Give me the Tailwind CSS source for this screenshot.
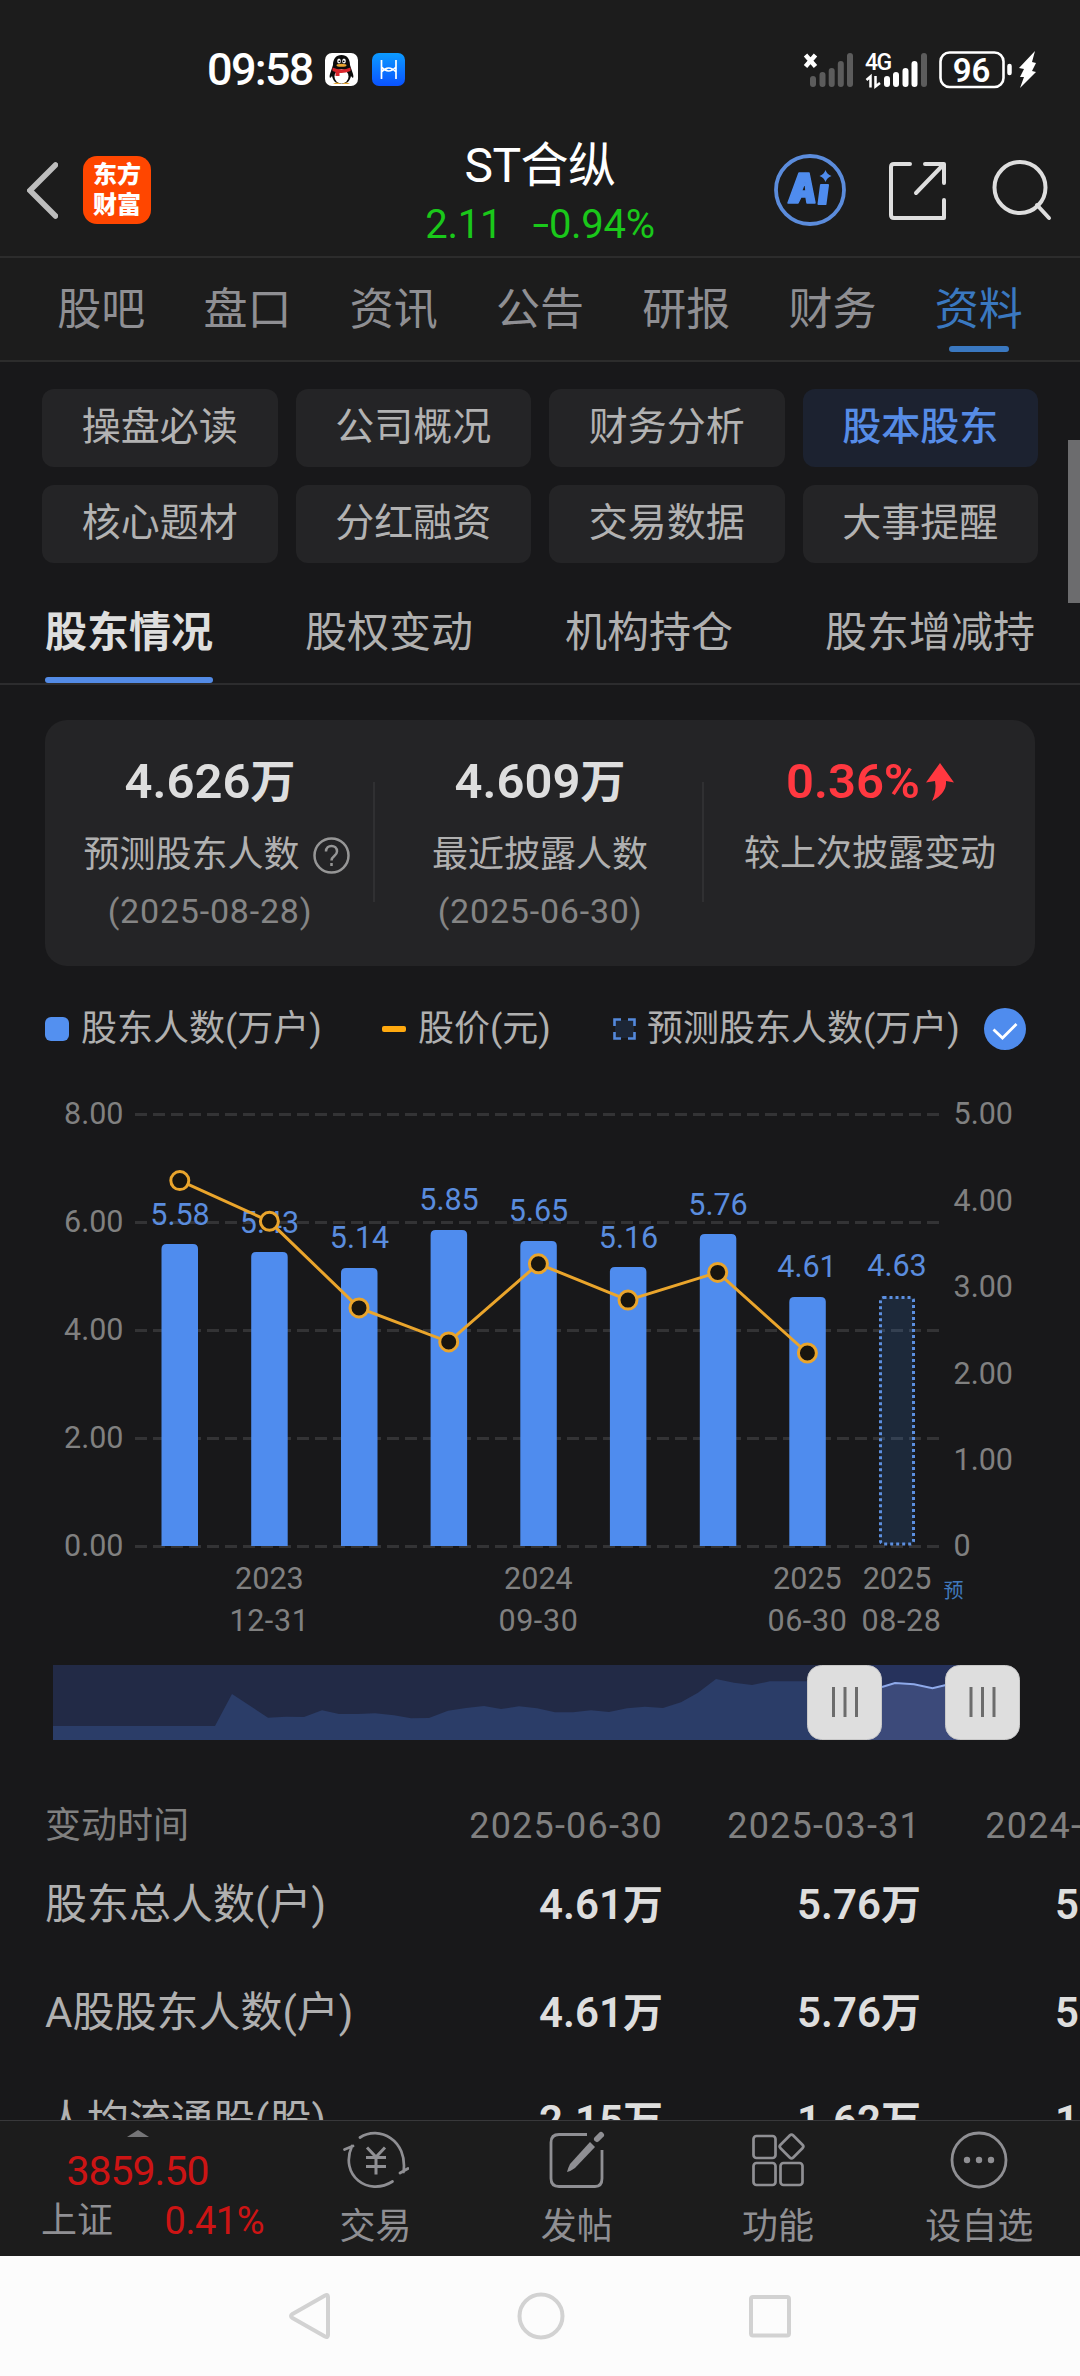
<!DOCTYPE html>
<html lang="zh-CN">
<head>
    <meta charset="UTF-8">
    <meta name="viewport" content="width=device-width, initial-scale=1.0">
    <title>ST合纵 - 股本股东</title>
    <script src="https://cdn.jsdelivr.net/npm/@tailwindcss/browser@4"></script>
</head>
<body class="bg-[#18181a]">
    <div class="relative flex h-[2376px] w-[1080px] flex-col overflow-hidden whitespace-nowrap font-[Roboto,'Noto_Sans_CJK_SC',sans-serif]">

        <!-- Status bar -->
        <div class="flex h-[110px] shrink-0 items-center bg-[#1c1c1c] pt-[29px] pl-[207px]">
            <span class="w-[118px] text-[45px] leading-[80px] font-medium tracking-[-1.7px] text-white">09:58</span>
            <svg class="h-[33px] w-[33px]" viewBox="0 0 33 33">
                <rect width="33" height="33" rx="7" fill="#fff"/>
                <path d="M16.500 2C11 2 8 6 8 12L5 21c-1 4 0 5 2 2 1 5 4 8 9.500 8s8.500-3 9.500-8c2 3 3 2 2-2l-3-9c0-6-3-10-8.500-10z" fill="#0b0b0b"/>
                <ellipse cx="16.500" cy="23.500" rx="7" ry="7.200" fill="#fff"/>
                <ellipse cx="14" cy="8" rx="1.800" ry="2.500" fill="#fff"/>
                <ellipse cx="19" cy="8" rx="1.800" ry="2.500" fill="#fff"/>
                <circle cx="14.300" cy="8.300" r=".9"/><circle cx="18.700" cy="8.300" r=".9"/>
                <ellipse cx="16.500" cy="12.300" rx="5" ry="1.500" fill="#e8a530"/>
                <path d="M7.500 14.500q9 4 18 0v3.500q-6 2.500-11 2V23h-4v-4l-3-1z" fill="#d9262c"/>
                <path d="M8 31q4-3 8 0zM17 31q4-3 8 0z" fill="#e8a530"/>
            </svg>
            <svg class="ml-[14px] h-[33px] w-[33px]" viewBox="0 0 33 33">
                <defs><linearGradient id="hb" x1="0" y1="0" x2="0" y2="1"><stop stop-color="#0c9bff"/><stop offset="1" stop-color="#0a52ff"/></linearGradient></defs>
                <rect width="33" height="33" rx="7" fill="url(#hb)"/>
                <g fill="none" stroke="#fff" stroke-width="1.700"><path d="M9.500 7v19M24 7v19M9.500 14q7 8 14.500 0M9.500 19q7-8 14.500 0"/></g>
            </svg>
            <svg class="ml-[397px] h-[38px] w-[236px] overflow-visible" viewBox="802 50 236 38">
                <path d="M805.500 54l10 11.500M815.500 54l-10 11.500" stroke="#fff" stroke-width="4.500"/>
                <g stroke="#5c5c5c" stroke-width="6" stroke-linecap="round">
                    <path d="M813 78v5M822.500 74v9M831.700 70v13M840.800 63v20M850 55v28M924 55v28"/>
                </g>
                <text x="865" y="69" fill="#fff" font-size="23" font-weight="500" letter-spacing="-1.500">4G</text>
                <path d="M866.500 79l4-3.500v11M875.500 75v10.500l4.500-3.500M875.500 82v3" fill="none" stroke="#fff" stroke-width="2.500"/>
                <path d="M887 78v5M896 74v9M905.500 70v13M914.500 63v20" stroke="#fff" stroke-width="6" stroke-linecap="round"/>
                <rect x="940.500" y="51.500" width="63" height="34.500" rx="9" fill="none" stroke="#fff" stroke-width="2.600"/>
                <path d="M1009.500 65v7" stroke="#fff" stroke-width="4.500" stroke-linecap="round"/>
                <text x="971.500" y="80.500" fill="#fff" font-size="33" font-weight="600" text-anchor="middle">96</text>
                <path d="M1035 50l-16 17 5 1-4 8 4 0-4 11 16-16-4-1 4-8-4-1z" fill="#fff"/>
            </svg>
        </div>

        <!-- Title bar -->
        <div class="grid h-[148px] shrink-0 grid-cols-[1fr_auto_1fr] items-center border-b-2 border-[#2c2c2c] bg-[#1c1c1c] pt-[14px]">
            <div class="flex items-center gap-[25px] pl-[27px]">
                <svg class="h-[57px] w-[31px]" viewBox="0 0 31 57"><path d="M28.500 3L3 28.500 28.500 54" fill="none" stroke="#bdbdbd" stroke-width="5.500" stroke-linecap="round"/></svg>
                <div class="flex h-[68px] w-[68px] flex-col items-center justify-center rounded-[14px] bg-[#ff4600] text-[24px] leading-[30px] font-black text-white">
                    <span>东方</span><span>财富</span>
                </div>
            </div>
            <div class="mt-[14px] flex flex-col items-center gap-[3px] self-start">
                <h1 class="text-[48px] leading-[56px] tracking-[-0.5px] text-white">ST合纵</h1>
                <div class="flex gap-[36px] text-[40px] leading-[56px] tracking-[-0.3px] text-[#1ac81a]"><span>2.11</span><span><span class="inline-block origin-right scale-x-150">-</span>0.94%</span></div>
            </div>
            <div class="flex items-center justify-end pr-[27px]">
                <svg class="h-[74px] w-[74px]" viewBox="0 0 74 74">
                    <circle cx="37" cy="37" r="34" fill="none" stroke="#5b8cdc" stroke-width="3.800"/>
                    <path fill-rule="evenodd" d="M26 20h10l6 30H34l-1-6h-5l-3 6H15zM32 29l-3.500 9H33z" fill="#4f8cee" stroke="#4f8cee" stroke-width="1.500" stroke-linejoin="round"/>
                    <path d="M48 32h7l-2.500 19h-7z" fill="#4f8cee" stroke="#4f8cee" stroke-width="2" stroke-linejoin="round"/>
                    <path d="M52.500 17q1.500 4.500 6 6-4.500 1.500-6 6-1.500-4.500-6-6 4.500-1.500 6-6z" fill="#4f8cee"/>
                </svg>
                <svg class="ml-[41px] h-[60px] w-[60px]" viewBox="0 0 60 60"><path d="M22 4H6q-3 0-3 3v48q0 3 3 3h50V40M37 4h19v19M55 5L28 33" fill="none" stroke="#dedede" stroke-width="4" stroke-linecap="round" stroke-linejoin="round"/></svg>
                <svg class="ml-[43px] h-[62px] w-[62px]" viewBox="0 0 62 62"><path d="M46 46l12 13" stroke="#dedede" stroke-width="4" stroke-linecap="round"/><circle cx="29" cy="28.500" r="25.500" fill="none" stroke="#dedede" stroke-width="4"/></svg>
            </div>
        </div>

        <!-- Main tabs -->
        <div class="grid h-[104px] shrink-0 grid-cols-7 border-b-2 border-[#2c2c2c] bg-[#1c1c1c] px-[28px] pt-[18px] text-center text-[44px] leading-[68px] text-[#8f8f93]">
            <span>股吧</span>
            <span>盘口</span>
            <span>资讯</span>
            <span>公告</span>
            <span>研报</span>
            <span>财务</span>
            <div class="flex flex-col items-center gap-[2px] text-[#3a78c0]">
                <span>资料</span>
                <i class="h-[6px] w-[60px] rounded-full bg-[#3a78c0]"></i>
            </div>
        </div>

        <!-- Section chips -->
        <div class="mt-[27px] grid shrink-0 grid-cols-4 gap-[18px] px-[42px] text-center text-[39px] leading-[76px] text-[#b2b2b2]">
            <span class="h-[78px] rounded-xl bg-[#242426]">操盘必读</span>
            <span class="h-[78px] rounded-xl bg-[#242426]">公司概况</span>
            <span class="h-[78px] rounded-xl bg-[#242426]">财务分析</span>
            <span class="h-[78px] rounded-xl bg-[#1c2230] font-medium text-[#568ce6]">股本股东</span>
            <span class="h-[78px] rounded-xl bg-[#242426]">核心题材</span>
            <span class="h-[78px] rounded-xl bg-[#242426]">分红融资</span>
            <span class="h-[78px] rounded-xl bg-[#242426]">交易数据</span>
            <span class="h-[78px] rounded-xl bg-[#242426]">大事提醒</span>
        </div>

        <!-- Sub tabs -->
        <div class="mt-[37px] flex h-[85px] shrink-0 justify-between border-b-2 border-[#2c2c2e] px-[45px] text-[42px] leading-[66px] text-[#b0b0b0]">
            <div class="flex flex-col gap-[11px] font-bold text-[#dedede]">
                <span>股东情况</span>
                <i class="h-[6px] w-full rounded-full bg-[#538be6]"></i>
            </div>
            <span>股权变动</span>
            <span>机构持仓</span>
            <span>股东增减持</span>
        </div>

        <!-- Summary card -->
        <div class="mx-[45px] mt-[35px] grid h-[246px] shrink-0 grid-cols-3 rounded-[22px] bg-[#242426] text-center text-[36px] text-[#b0b0b0]">
            <div class="flex flex-col items-center pt-[32px]">
                <b class="text-[49px] leading-[60px] font-semibold text-[#dedede]">4.626<span class="text-[45px]">万</span></b>
                <div class="mt-[14px] flex items-center gap-[13px] pl-[13px] leading-[56px]">
                    <span>预测股东人数</span>
                    <svg class="h-[37px] w-[37px]" viewBox="0 0 37 37" fill="none" stroke="#969696" stroke-width="2.500"><circle cx="18.500" cy="18.500" r="17"/><path d="M13 14.500c0-7.500 11-7.500 11 0 0 4.500-5.500 4.500-5.500 9M18.500 26v3"/></svg>
                </div>
                <span class="text-[34px] leading-[56px] tracking-[0.8px] text-[#858585]">(2025-08-28)</span>
            </div>
            <div class="relative flex flex-col items-center pt-[32px]">
                <i class="absolute top-[62px] left-[-2px] h-[120px] w-[2px] bg-[#303032]"></i>
                <i class="absolute top-[62px] right-[1px] h-[120px] w-[2px] bg-[#303032]"></i>
                <b class="text-[49px] leading-[60px] font-semibold text-[#dedede]">4.609<span class="text-[45px]">万</span></b>
                <span class="mt-[14px] leading-[56px]">最近披露人数</span>
                <span class="text-[34px] leading-[56px] tracking-[0.8px] text-[#858585]">(2025-06-30)</span>
            </div>
            <div class="flex flex-col items-center pt-[32px]">
                <div class="flex items-center gap-[6px] text-[#ff3840]">
                    <b class="text-[49px] leading-[60px] font-semibold">0.36%</b>
                    <svg class="h-[38px] w-[28px]" viewBox="0 0 28 38"><path d="M14 0l14 19.500-8-1.500q1 12-14 20 5-10 3-20L0 19.500z" fill="#ff3840"/></svg>
                </div>
                <span class="mt-[14px] leading-[56px]">较上次披露变动</span>
            </div>
        </div>

        <!-- Chart legend -->
        <div class="mt-[38px] flex h-[50px] shrink-0 items-center pl-[45px] text-[36px] text-[#b0b0b0]">
            <i class="h-[24px] w-[24px] rounded-[6px] bg-[#5390f0]"></i>
            <span class="ml-[12px] w-[301px]">股东人数(万户)</span>
            <i class="h-[6px] w-[24px] rounded-[2px] bg-[#ffa90f]"></i>
            <span class="ml-[12px] w-[195px]">股价(元)</span>
            <svg class="h-[22px] w-[23px]" viewBox="0 0 23 22"><rect x="2" y="2" width="19" height="18" fill="#1c2636"/><path d="M1.500 8V1.500H8M15 1.500h6.500V8M21.500 14v6.500H15M8 20.500H1.500V14" fill="none" stroke="#5489dc" stroke-width="2.600"/></svg>
            <span class="ml-[11px] w-[337px]">预测股东人数(万户)</span>
            <svg class="h-[42px] w-[42px]" viewBox="0 0 42 42"><circle cx="21" cy="21" r="21" fill="#4f8cee"/><path d="M9.500 21.500l9 8.500 14-14" fill="none" stroke="#fff" stroke-width="2.800"/></svg>
        </div>

        <!-- Holder count / price chart -->
        <svg class="mt-[26px] h-[580px] w-[1080px] shrink-0" viewBox="0 1080 1080 580" font-size="30.500">
            <path d="M135 1114.500h805M135 1222.500h805M135 1330.500h805M135 1438.500h805M135 1546.500h805" stroke="#333335" stroke-width="3" stroke-dasharray="12 6"/>
            <g fill="#4f8cee">
                <path d="M161.500 1546v-297q0-5 5-5h26.500q5 0 5 5v297z"/>
                <path d="M251.200 1546v-289q0-5 5-5h26.500q5 0 5 5v289z"/>
                <path d="M341 1546v-273q0-5 5-5h26.500q5 0 5 5v273z"/>
                <path d="M430.600 1546v-311q0-5 5-5h26.500q5 0 5 5v311z"/>
                <path d="M520.300 1546v-300q0-5 5-5h26.500q5 0 5 5v300z"/>
                <path d="M609.900 1546v-274q0-5 5-5h26.500q5 0 5 5v274z"/>
                <path d="M699.800 1546v-307q0-5 5-5h26.500q5 0 5 5v307z"/>
                <path d="M789.300 1546v-244q0-5 5-5h26.500q5 0 5 5v244z"/>
            </g>
            <rect x="880.500" y="1297.500" width="33" height="246.500" rx="3" fill="#3c82dc" fill-opacity=".17" stroke="#5c8fe0" stroke-width="3" stroke-dasharray="3 3"/>
            <g fill="#5a8cde" text-anchor="middle">
                <text x="180" y="1225">5.58</text>
                <text x="269.500" y="1233">5.43</text>
                <text x="359.500" y="1248">5.14</text>
                <text x="449" y="1210">5.85</text>
                <text x="538.500" y="1221">5.65</text>
                <text x="628.500" y="1248">5.16</text>
                <text x="718" y="1215">5.76</text>
                <text x="807" y="1277">4.61</text>
                <text x="897" y="1276">4.63</text>
            </g>
            <path d="M179.800 1180.600L269.400 1221.300 359 1307.900 448.700 1341.900 538.400 1263.800 628 1300.100 717.700 1272.400 807.400 1353" fill="none" stroke="#eaa52c" stroke-width="3"/>
            <g fill="#18150f" stroke="#eaa52c" stroke-width="3">
                <circle cx="179.800" cy="1180.600" r="9"/><circle cx="269.400" cy="1221.300" r="9"/>
                <circle cx="359" cy="1307.900" r="9"/><circle cx="448.700" cy="1341.900" r="9"/>
                <circle cx="538.400" cy="1263.800" r="9"/><circle cx="628" cy="1300.100" r="9"/>
                <circle cx="717.700" cy="1272.400" r="9"/><circle cx="807.400" cy="1353" r="9"/>
            </g>
            <g fill="#808080" text-anchor="end">
                <text x="123.500" y="1124">8.00</text>
                <text x="123.500" y="1232">6.00</text>
                <text x="123.500" y="1340">4.00</text>
                <text x="123.500" y="1448">2.00</text>
                <text x="123.500" y="1556">0.00</text>
            </g>
            <g fill="#808080">
                <text x="953.500" y="1124">5.00</text>
                <text x="953.500" y="1211">4.00</text>
                <text x="953.500" y="1297">3.00</text>
                <text x="953.500" y="1383.500">2.00</text>
                <text x="953.500" y="1470">1.00</text>
                <text x="953.500" y="1556">0</text>
            </g>
            <g fill="#808080" text-anchor="middle">
                <text x="269.400" y="1589">2023</text><text x="269.400" y="1631" letter-spacing=".6">12-31</text>
                <text x="538.400" y="1589">2024</text><text x="538.400" y="1631" letter-spacing=".6">09-30</text>
                <text x="807.400" y="1589">2025</text><text x="807.400" y="1631" letter-spacing=".6">06-30</text>
                <text x="897" y="1589">2025</text><text x="901.500" y="1631" letter-spacing=".6">08-28</text>
            </g>
            <text x="943.500" y="1598" font-size="20" fill="#4078bc">预</text>
        </svg>

        <!-- Range slider -->
        <svg class="mt-[5px] ml-[53px] h-[75px] w-[967px] shrink-0" viewBox="0 0 967 75">
            <rect width="930" height="75" fill="#222a46"/>
            <path d="M0 75V61H162L179 29 215 52.700 233 51.700 251 52 269 45.300 286 49H305L322 48.300 341 50.300 358 53.300 376 53 395 45.700 413 43 431 41 448 44 466 41.300 484 43.300 502 47.300H520L538 45.300 556 47 574 43.300 592 41.700 610 43 628 37.300 645 27.700 663 14 681 17.700 699 20 717 16.300H792V75z" fill="#2b3d68"/>
            <rect x="792" width="138" height="75" fill="#26325c"/>
            <path d="M792 75V18L829 22 842 18 861 19.300 879.500 23.300 894 19.700 930 15V75z" fill="#3c4a7a"/>
            <path d="M829 22L842 18 861 19.300 879.500 23.300 894 19.700" fill="none" stroke="#8ea9ea" stroke-width="2"/>
            <rect x="754.500" y=".5" width="74" height="74" rx="14" fill="#dedede" stroke="#c8c8c8"/>
            <rect x="892.500" y=".5" width="74" height="74" rx="14" fill="#dedede" stroke="#c8c8c8"/>
            <path d="M780.500 22v30M792 22v30M803.500 22v30M918 22v30M929.500 22v30M941 22v30" stroke="#6c6c6c" stroke-width="3"/>
        </svg>

        <div class="mt-[51px] flex h-[329px] shrink-0 flex-col overflow-hidden pl-[45px] text-[42px] leading-[108px] text-[#b0b0b0]">
            <div class="grid h-[60px] shrink-0 grid-cols-[360px_258px_258px_258px] text-[36px] leading-[70px] text-[#808080]">
                <span>变动时间</span>
                <span class="text-right tracking-[1.2px]">2025-06-30</span>
                <span class="text-right tracking-[1.2px]">2025-03-31</span>
                <span class="text-right tracking-[1.2px]">2024-12-31</span>
            </div>
            <div class="grid h-[108px] shrink-0 grid-cols-[360px_258px_258px_258px]">
                <span>股东总人数(户)</span>
                <b class="text-right font-semibold text-[#dedede]">4.61<span class="text-[40px]">万</span></b>
                <b class="text-right font-semibold text-[#dedede]">5.76<span class="text-[40px]">万</span></b>
                <b class="text-right font-semibold text-[#dedede]">5.16<span class="text-[40px]">万</span></b>
            </div>
            <div class="grid h-[108px] shrink-0 grid-cols-[360px_258px_258px_258px]">
                <span>A股股东人数(户)</span>
                <b class="text-right font-semibold text-[#dedede]">4.61<span class="text-[40px]">万</span></b>
                <b class="text-right font-semibold text-[#dedede]">5.76<span class="text-[40px]">万</span></b>
                <b class="text-right font-semibold text-[#dedede]">5.16<span class="text-[40px]">万</span></b>
            </div>
            <div class="grid h-[108px] shrink-0 grid-cols-[360px_258px_258px_258px]">
                <span>人均流通股(股)</span>
                <b class="text-right font-semibold text-[#dedede]">2.15<span class="text-[40px]">万</span></b>
                <b class="text-right font-semibold text-[#dedede]">1.62<span class="text-[40px]">万</span></b>
                <b class="text-right font-semibold text-[#dedede]">1.81<span class="text-[40px]">万</span></b>
            </div>
        </div>

        <!-- Bottom bar -->
        <div class="grid h-[136px] shrink-0 grid-cols-[275px_repeat(4,1fr)] border-t border-[#38383a] bg-[#1c1c1c] text-[36px] leading-[48px] text-[#8f8f93]">
            <div class="flex flex-col items-center pt-[9px]">
                <svg class="h-[7px] w-[22px]" viewBox="0 0 22 7"><path d="M11 0l11 7H0z" fill="#757577"/></svg>
                <span class="mt-[9px] text-[41px] leading-[50px] tracking-[-1px] text-[#cc1414]">3859.50</span>
                <div class="mt-[1px] flex w-full justify-between pr-[11px] pl-[41px]">
                    <span>上证</span>
                    <span class="text-[38px] tracking-[-0.5px] text-[#cc1414]">0.41%</span>
                </div>
            </div>
            <div class="flex flex-col items-center pt-[9px]">
                <svg class="h-[60px] w-[66px]" viewBox="0 0 66 60" fill="none" stroke="#8f8f93" stroke-width="2.700" stroke-linecap="round">
                    <path d="M17 7.500C36-5 65 10 60.500 42M49.500 51.500C25 67-4 45 9 16M1.500 19.500L10 16M57 43l8-4.500"/>
                    <path d="M24 17.500l9 9.500 9-9.500M23 27.500h20M23 36.500h20M33 27v17.500" stroke-width="3" stroke-linecap="butt"/>
                </svg>
                <span class="mt-[13px]">交易</span>
            </div>
            <div class="flex flex-col items-center pt-[9px]">
                <svg class="h-[60px] w-[60px]" viewBox="0 0 60 60" fill="none" stroke="#8f8f93" stroke-width="2.800">
                    <path d="M40 4.500H12q-8 0-8 8v36q0 8 8 8h36q7 0 7-8V20"/>
                    <path d="M50 9L54 5" stroke-width="6" stroke-linecap="round"/>
                    <path d="M43 12l5 5-20 21q-4 3-8 4 1-4 3-8z" fill="#8f8f93" stroke="none"/>
                </svg>
                <span class="mt-[13px]">发帖</span>
            </div>
            <div class="flex flex-col items-center pt-[9px]">
                <svg class="h-[60px] w-[60px]" viewBox="0 0 60 60" fill="none" stroke="#8f8f93" stroke-width="2.700">
                    <rect x="5.500" y="6" width="22" height="22" rx="3"/>
                    <rect x="5.500" y="33" width="22" height="22" rx="3"/>
                    <rect x="32.500" y="33" width="22" height="22" rx="3"/>
                    <rect x="34.500" y="7.500" width="18" height="18" rx="2.500" transform="rotate(45 43.500 16.500)"/>
                </svg>
                <span class="mt-[13px]">功能</span>
            </div>
            <div class="flex flex-col items-center pt-[9px]">
                <svg class="h-[60px] w-[60px]" viewBox="0 0 60 60">
                    <circle cx="30" cy="30" r="27" fill="none" stroke="#8f8f93" stroke-width="2.800"/>
                    <g fill="#8f8f93"><circle cx="18" cy="30" r="3.200"/><circle cx="30" cy="30" r="3.200"/><circle cx="42" cy="30" r="3.200"/></g>
                </svg>
                <span class="mt-[13px]">设自选</span>
            </div>
        </div>

        <!-- System navigation -->
        <div class="flex h-[120px] shrink-0 items-center justify-center bg-[#fcfcfc]">
            <svg class="h-[50px] w-[506px]" viewBox="286 2291 506 50" fill="none" stroke="#d2d2d2" stroke-width="4">
                <path d="M291.500 2314L324 2295.500Q327 2294 327 2297V2335Q327 2338 324 2336.500L291.500 2318Q288.500 2316 291.500 2314z"/>
                <circle cx="540" cy="2316" r="21.500"/>
                <rect x="750" y="2297" width="38" height="38.500" rx="2"/>
            </svg>
        </div>

        <!-- Scrollbar thumb -->
        <i class="absolute top-[440px] right-0 h-[163px] w-[12px] bg-[#6c6c6e]"></i>
    </div>
</body>
</html>
